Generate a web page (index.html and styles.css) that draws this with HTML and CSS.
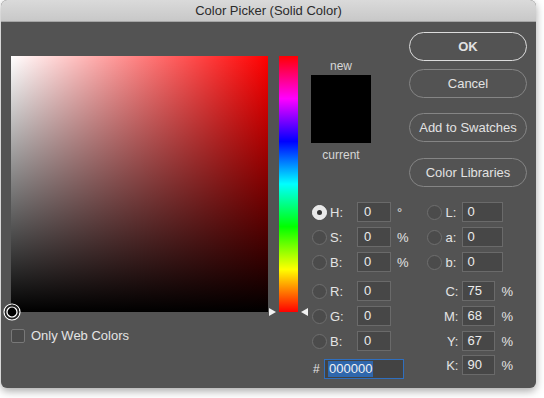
FILE: index.html
```html
<!DOCTYPE html>
<html lang="en">
<head>
  <meta charset="UTF-8">
  <title>Color Picker (Solid Color)</title>
  <link rel="stylesheet" href="styles.css">
</head>
<body>

  <div class="dialog">
    <div class="titlebar">Color Picker (Solid Color)</div>

    <div class="content">
      <!-- Campo de cor -->
      <div class="picker">
        <div class="field">
          <svg class="marker" width="18" height="18" viewBox="0 0 18 18">
            <circle cx="9" cy="9" r="8" fill="none" stroke="#fff" stroke-width="1.2"/>
            <circle cx="9" cy="9" r="6.5" fill="none" stroke="#222" stroke-width="1.6"/>
            <circle cx="9" cy="9" r="5" fill="#000" stroke="#fff" stroke-width="1.2"/>
          </svg>
        </div>
        <label class="webcolors"><span class="checkbox"></span>Only Web Colors</label>
      </div>

      <!-- Barra de matiz -->
      <div class="hue-wrap">
        <div class="hue"></div>
        <span class="arrow arrow-right"></span>
        <span class="arrow arrow-left"></span>
      </div>

      <div class="controls">
        <div class="top">
          <div class="preview">
            <div class="caption">new</div>
            <div class="swatch"></div>
            <div class="caption current">current</div>
          </div>
          <div class="buttons">
            <button class="btn btn-ok">OK</button>
            <button class="btn btn-cancel">Cancel</button>
            <button class="btn btn-add">Add to Swatches</button>
            <button class="btn btn-lib">Color Libraries</button>
          </div>
        </div>

        <div class="form">
          <div class="col col-left">
            <div class="row"><span class="radio checked"></span><span class="lbl">H:</span><span class="field-input">0</span><span class="unit">°</span></div>
            <div class="row"><span class="radio"></span><span class="lbl">S:</span><span class="field-input">0</span><span class="unit">%</span></div>
            <div class="row"><span class="radio"></span><span class="lbl">B:</span><span class="field-input">0</span><span class="unit">%</span></div>
            <div class="row group"><span class="radio"></span><span class="lbl">R:</span><span class="field-input">0</span></div>
            <div class="row"><span class="radio"></span><span class="lbl">G:</span><span class="field-input">0</span></div>
            <div class="row"><span class="radio"></span><span class="lbl">B:</span><span class="field-input">0</span></div>
            <div class="row hex"><span class="hash">#</span><span class="hex-input"><span class="sel">000000</span></span></div>
          </div>

          <div class="col col-right">
            <div class="row lab"><span class="radio"></span><span class="lbl">L:</span><span class="field-input">0</span></div>
            <div class="row lab"><span class="radio"></span><span class="lbl">a:</span><span class="field-input">0</span></div>
            <div class="row lab"><span class="radio"></span><span class="lbl">b:</span><span class="field-input">0</span></div>
            <div class="row cmyk group"><span class="lbl">C:</span><span class="field-input">75</span><span class="unit">%</span></div>
            <div class="row cmyk"><span class="lbl">M:</span><span class="field-input">68</span><span class="unit">%</span></div>
            <div class="row cmyk"><span class="lbl">Y:</span><span class="field-input">67</span><span class="unit">%</span></div>
            <div class="row cmyk k"><span class="lbl">K:</span><span class="field-input">90</span><span class="unit">%</span></div>
          </div>
        </div>
      </div>
    </div>
  </div>

</body>
</html>
```

FILE: styles.css
```css
* {
  box-sizing: border-box;
  margin: 0;
  padding: 0;
}

body {
  font-family: "Liberation Sans", Arial, sans-serif;
  background: #fff;
  width: 544px;
  height: 398px;
  overflow: hidden;
}

.dialog {
  width: 535px;
  height: 388px;
  margin-left: 1px;
  background: #535353;
  border-radius: 6px;
  overflow: hidden;
  box-shadow: 0 3px 8px rgba(0, 0, 0, 0.35);
  display: flex;
  flex-direction: column;
}

.titlebar {
  height: 22px;
  line-height: 21px;
  text-align: center;
  font-size: 13px;
  color: #2b2b2b;
  background: linear-gradient(#dadada, #c8c8c8);
  border-bottom: 1px solid #a5a5a5;
}

.content {
  display: flex;
  padding: 10px 0 0 10px;
}

/* Campo de cor */
.picker {
  margin-top: 24px;
}

.field {
  position: relative;
  width: 257px;
  height: 256px;
  background: linear-gradient(to top, #000, rgba(0, 0, 0, 0)),
              linear-gradient(to right, #fff, #f00);
}

.marker {
  position: absolute;
  left: -8px;
  bottom: -9px;
}

.webcolors {
  display: flex;
  align-items: center;
  margin-top: 16px;
  font-size: 13px;
  color: #e4e4e4;
}

.checkbox {
  width: 14px;
  height: 14px;
  margin-right: 6px;
  background: #4a4a4a;
  border: 1px solid #787878;
  border-radius: 2px;
}

/* Barra de matiz */
.hue-wrap {
  position: relative;
  margin: 24px 0 0 11px;
}

.hue {
  width: 19px;
  height: 256px;
  background: linear-gradient(#f00 0%, #f0f 16.67%, #00f 33.33%, #0ff 50%, #0f0 66.67%, #ff0 83.33%, #f00 100%);
}

.arrow {
  position: absolute;
  top: 252px;
  width: 0;
  height: 0;
  border-top: 4px solid transparent;
  border-bottom: 4px solid transparent;
}

.arrow-right {
  left: -10px;
  border-left: 7px solid #f2f2f2;
}

.arrow-left {
  right: -10px;
  border-right: 7px solid #f2f2f2;
}

/* Controles */
.controls {
  margin-left: 13px;
  width: 216px;
}

.top {
  display: flex;
}

.preview {
  width: 60px;
  margin-top: 27px;
  text-align: center;
}

.caption {
  font-size: 12px;
  line-height: 15px;
  color: #d6d6d6;
}

.swatch {
  height: 68px;
  margin-top: 1px;
  background: #000;
}

.caption.current {
  margin-top: 5px;
}

.buttons {
  margin-left: 38px;
  width: 118px;
  display: flex;
  flex-direction: column;
}

.btn {
  height: 29px;
  border-radius: 15px;
  background: transparent;
  border: 1px solid #858585;
  color: #e2e2e2;
  font-family: inherit;
  font-size: 13px;
}

.btn-ok {
  border-color: #dcdcdc;
  font-weight: bold;
}

.btn-cancel {
  margin-top: 8px;
}

.btn-add {
  margin-top: 15px;
}

.btn-lib {
  margin-top: 16px;
}

/* Formulario */
.form {
  display: flex;
  margin-top: 15px;
}

.col-left {
  margin-left: 1px;
  width: 116px;
}

.row {
  display: flex;
  align-items: center;
  height: 20px;
  margin-top: 5px;
  font-size: 13px;
  color: #e4e4e4;
}

.row:first-child {
  margin-top: 0;
}

.row.group {
  margin-top: 9px;
}

.row.hex {
  margin-top: 8px;
}

.radio {
  width: 15px;
  height: 15px;
  border-radius: 50%;
  background: #4b4b4b;
  border: 1px solid #6e6e6e;
}

.radio.checked {
  background: #e8e8e8;
  border-color: #f4f4f4;
  display: flex;
  align-items: center;
  justify-content: center;
}

.radio.checked::after {
  content: "";
  width: 5px;
  height: 5px;
  border-radius: 50%;
  background: #333;
}

.lbl {
  width: 27px;
  margin-left: 3px;
}

.field-input {
  width: 34px;
  height: 20px;
  line-height: 18px;
  padding-left: 6px;
  background: #474747;
  border: 1px solid #6a6a6a;
  color: #ececec;
}

.unit {
  margin-left: 6px;
}

.hash {
  width: 11px;
  margin-left: 1px;
  font-size: 12px;
}

.hex-input {
  width: 80px;
  height: 20px;
  padding: 1px 0 0 3px;
  background: #434343;
  border: 1px solid #2f6fbf;
}

.sel {
  display: inline-block;
  line-height: 16px;
  padding: 0 1px;
  background: #2f67ad;
  color: #f2f2f2;
  font-size: 13px;
}

.col-right {
  width: 100px;
}

.lab .lbl {
  width: 17px;
}

.lab .field-input {
  width: 41px;
  padding-left: 4px;
}

.cmyk .lbl {
  width: 31px;
  margin: 0 4px 0 0;
  text-align: right;
}

.cmyk .field-input {
  width: 33px;
  padding-left: 4px;
}

.row.k {
  margin-top: 4px;
}
```
